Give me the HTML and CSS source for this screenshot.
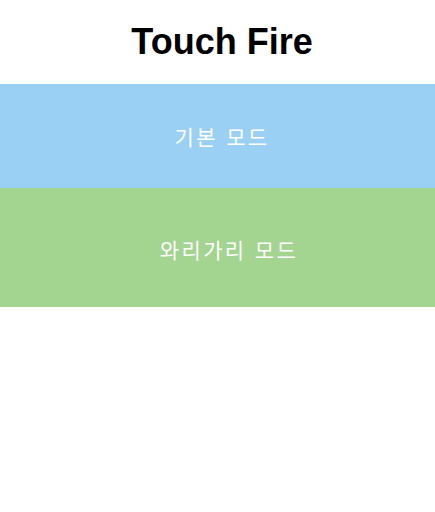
FILE: index.html
```html
<!DOCTYPE html>
<html lang="ko">
<head>
    <meta charset="UTF-8">
    <meta name="viewport" content="width=device-width, initial-scale=1.0">
    <title>Touch Fire</title>
    <link rel="stylesheet" href="styles.css">
</head>
<body>
    <div class="header">
        <h1>Touch Fire</h1>
    </div>

    <div class="mode-list">
        <div class="mode-item mode-basic">기본 모드</div>
        <div class="mode-item mode-wari">와리가리 모드</div>
    </div>
</body>
</html>
```

FILE: styles.css
```css
body {
    font-family: 'Liberation Sans', Arial, 'Noto Sans CJK KR', sans-serif;
    background-color: #ffffff;
    margin: 0;
    padding: 0;
}

.header {
    height: 84px;
    padding-left: 9px;
    padding-bottom: 1px;
    box-sizing: border-box;
    display: flex;
    align-items: center;
    justify-content: center;
}

h1 {
    margin: 0;
    font-size: 36px;
    font-weight: bold;
    color: #000;
}

.mode-list {
    display: flex;
    flex-direction: column;
}

.mode-item {
    display: flex;
    align-items: center;
    justify-content: center;
    color: #fff;
    font-size: 21px;
    letter-spacing: 2.4px;
    font-family: 'Noto Sans CJK KR', sans-serif;
    box-sizing: border-box;
    cursor: pointer;
}

.mode-basic {
    height: 104px;
    padding-left: 9px;
    background-color: #9ad0f4;
}

.mode-wari {
    height: 119px;
    padding-left: 23px;
    padding-top: 2px;
    background-color: #a3d490;
}
```
